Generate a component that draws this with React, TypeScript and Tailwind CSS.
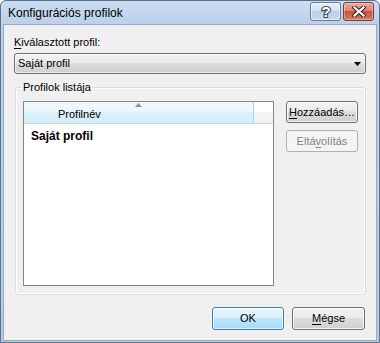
import React from "react";

const FONT = { fontFamily: '"Liberation Sans", Arial, sans-serif' };

function TitleButtons() {
  return (
    <div className="mt-[1px] mr-[5px] flex gap-[2px]">
      {/* help */}
      <div className="flex h-[19px] w-[31px] items-center justify-center rounded-[3px] border border-[#6b7a8f] bg-[linear-gradient(to_bottom,#e6eff9_0%,#d3e1f0_45%,#bccfe6_50%,#c6d8ec_100%)] shadow-[inset_0_0_0_1px_rgba(255,255,255,0.55)]">
        <svg width="14" height="15" viewBox="0 0 14 15">
          <text
            x="7"
            y="13"
            textAnchor="middle"
            fontFamily="Liberation Sans, Arial, sans-serif"
            fontWeight="700"
            fontSize="15"
            fill="#fff"
            stroke="#3f4c5c"
            strokeWidth="2.2"
            paintOrder="stroke"
          >
            ?
          </text>
        </svg>
      </div>
      {/* close */}
      <div className="flex h-[19px] w-[31px] items-center justify-center rounded-[3px] border border-[#7b3b34] bg-[linear-gradient(to_bottom,#ebaa9d_0%,#dc8271_45%,#c8533f_50%,#d77a62_100%)] shadow-[inset_0_0_0_1px_rgba(255,255,255,0.35)]">
        <svg width="14" height="11" viewBox="0 0 14 11">
          <path
            d="M2.5 1.5 L11.5 9.5 M11.5 1.5 L2.5 9.5"
            stroke="#3d1f1a"
            strokeWidth="4.2"
            strokeLinecap="square"
          />
          <path
            d="M2.5 1.5 L11.5 9.5 M11.5 1.5 L2.5 9.5"
            stroke="#fff"
            strokeWidth="2.2"
            strokeLinecap="square"
          />
        </svg>
      </div>
    </div>
  );
}

function WinButton({
  children,
  width,
  height = 23,
  variant = "normal",
}: {
  children: React.ReactNode;
  width: number;
  height?: number;
  variant?: "normal" | "default" | "disabled";
}) {
  const cls =
    variant === "default"
      ? "border-[#3c7fb1] text-black bg-[linear-gradient(to_bottom,#eaf6fd_0%,#d9f0fc_45%,#bee6fd_50%,#a7d9f5_100%)] shadow-[inset_0_0_0_1px_rgba(255,255,255,0.7)]"
      : variant === "disabled"
      ? "border-[#adb2b5] text-[#838383] bg-[#f4f4f4]"
      : "border-[#707070] text-black bg-[linear-gradient(to_bottom,#f2f2f2_0%,#ebebeb_45%,#dddddd_50%,#cfcfcf_100%)] shadow-[inset_0_0_0_1px_rgba(255,255,255,0.75)]";
  return (
    <div
      className={`flex shrink-0 items-center justify-center rounded-[3px] border text-[11px] ${cls}`}
      style={{ width, height }}
    >
      {children}
    </div>
  );
}

export default function App() {
  return (
    <div
      className="flex h-[343px] w-[380px] flex-col overflow-hidden rounded-t-[6px] border border-[#5f7189] bg-[linear-gradient(to_bottom,#cadcf0_0%,#bdd2ea_20px,#b6cce6_100%)] text-black"
      style={FONT}
    >
      {/* title bar */}
      <div className="flex h-[24px] shrink-0 items-start justify-between">
        <div className="pl-[7px] pt-[5px] text-[12px] leading-[15px] text-black">
          Konfigurációs profilok
        </div>
        <TitleButtons />
      </div>

      {/* client */}
      <div className="mx-[3px] mb-[2px] flex h-[315px] flex-col bg-[#f0f0f0] px-[10px] pt-[10px] shadow-[0_0_0_1px_#95abc4]">
        <div className="text-[11px] leading-[15px]">
          <u className="underline-offset-[2px]">K</u>iválasztott profil:
        </div>

        {/* combo */}
        <div className="mt-[3px] flex h-[21px] items-center justify-between rounded-[3px] border border-[#707070] bg-[linear-gradient(to_bottom,#f2f2f2_0%,#ebebeb_45%,#dddddd_50%,#cfcfcf_100%)] pl-[3px] pr-[4px] text-[11px] shadow-[inset_0_0_0_1px_rgba(255,255,255,0.6)]">
          <span>Saját profil</span>
          <svg width="7" height="4" viewBox="0 0 7 4">
            <path d="M0 0 H7 L3.5 4 Z" fill="#000" />
          </svg>
        </div>

        {/* group box */}
        <div className="relative ml-[1px] mt-[13px] flex h-[208px] rounded-[3px] border border-[#d5dfe5] px-[7px] pb-[8px] pt-[13px] shadow-[inset_0_0_0_1px_#fff]">
          <div className="absolute left-[6px] top-[-8px] bg-[#f0f0f0] px-[1px] text-[11px] leading-[15px]">
            Profilok listája
          </div>

          {/* list view */}
          <div className="flex h-[185px] flex-1 flex-col border border-[#828790] bg-white">
            <div className="flex h-[22px] shrink-0">
              <div className="relative flex w-[230px] items-center border-b border-r border-b-[#c0dcea] border-r-[#96d9f9] bg-[linear-gradient(to_bottom,#f2f9fc_0%,#ebf6fb_45%,#dbf0fa_50%,#d5edf8_100%)] pl-[34px] text-[11px]">
                <svg
                  className="absolute left-[111px] top-[1px]"
                  width="7"
                  height="4"
                  viewBox="0 0 7 4"
                >
                  <path d="M3.5 0 L7 4 H0 Z" fill="#7c95b1" />
                </svg>
                <span className="pt-[3px]">Profilnév</span>
              </div>
              <div className="flex-1 border-b border-[#d5d5d5] bg-[linear-gradient(to_bottom,#ffffff_0%,#ffffff_45%,#f4f5f7_50%,#f1f2f4_100%)]" />
            </div>
            <div className="pl-[7px] pt-[4px] text-[12px] font-bold leading-[16px]">
              Saját profil
            </div>
          </div>

          {/* side buttons */}
          <div className="ml-[12px] flex flex-col gap-[7px]">
            <WinButton width={72} height={22}>
              <span>
                <u className="underline-offset-[2px]">H</u>ozzáadás…
              </span>
            </WinButton>
            <WinButton width={72} height={22} variant="disabled">
              <span>
                Eltá<u className="underline-offset-[2px]">v</u>olítás
              </span>
            </WinButton>
          </div>
        </div>

        {/* dialog buttons */}
        <div className="mt-[12px] flex justify-end gap-[8px] pr-[1px]">
          <WinButton width={72} variant="default">
            OK
          </WinButton>
          <WinButton width={73}>
            <span>
              <u className="underline-offset-[2px]">M</u>égse
            </span>
          </WinButton>
        </div>
      </div>
    </div>
  );
}
